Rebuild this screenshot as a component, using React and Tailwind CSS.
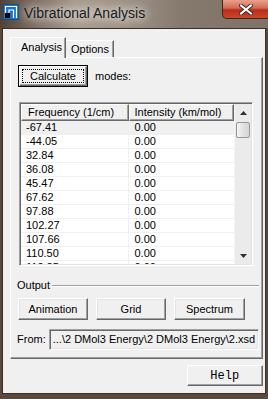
export default function App() {
  const rows = ["-67.41", "-44.05", "32.84", "36.08", "45.47", "67.62", "97.88", "102.27", "107.66", "110.50", "112.25"];
  const btn =
    "h-[22px] w-[70px] flex items-center justify-center bg-[#f0f0f0] border border-t-white border-l-white border-r-[#696969] border-b-[#696969] shadow-[inset_-1px_-1px_0_#a0a0a0,inset_1px_1px_0_#e3e3e3] text-[11px] text-black";
  return (
    <div className="w-[268px] h-[399px] flex flex-col overflow-hidden bg-[#5a4a3e] font-['Liberation_Sans',Arial,sans-serif] text-black">
      {/* title bar */}
      <div className="h-[28px] flex items-start bg-[linear-gradient(90deg,#4e4137_0%,#74665a_10%,#a89c8f_28%,#9e9286_48%,#85796d_68%,#7f7368_100%)]">
        <svg className="ml-[3px] mt-[4px]" width="16" height="16" viewBox="0 0 16 16">
          <rect x="0" y="0" width="16" height="16" fill="#1c74c9" />
          <rect x="0.5" y="0.5" width="15" height="15" fill="none" stroke="#0b4f94" />
          <path d="M2.5 14 V2.5 H13.5 V14" fill="none" stroke="#ffffff" strokeWidth="1.2" />
          <path d="M6 14 V6 H10.5 V14" fill="none" stroke="#ffffff" strokeWidth="1.2" />
          <rect x="2" y="9" width="5" height="5" fill="#000000" />
        </svg>
        <div className="ml-[5px] mt-[5px] text-[14px] leading-[16px] text-[#1a1a1a] [text-shadow:0_0_8px_#ffffff,0_0_12px_rgba(255,255,255,0.8)]">
          Vibrational Analysis
        </div>
        <div className="flex-1" />
        <div className="w-[46px] h-[19px] rounded-bl-[5px] border border-t-0 border-r-0 border-[#4a2018] bg-[linear-gradient(180deg,#e8a08c_0%,#d46a52_45%,#b82e18_55%,#c9472c_100%)] flex items-center justify-center">
          <svg width="14" height="11" viewBox="0 0 14 11">
            <path d="M2 1.5 L12 9.5 M12 1.5 L2 9.5" stroke="#3a2a2a" strokeWidth="4" strokeLinecap="square" />
            <path d="M2 1.5 L12 9.5 M12 1.5 L2 9.5" stroke="#ffffff" strokeWidth="2" strokeLinecap="square" />
          </svg>
        </div>
      </div>

      {/* window body */}
      <div className="flex-1 flex pl-[2px] pr-[3px] pb-[5px]">
        <div className="flex-1 flex flex-col border border-[#3a2f27] bg-[#f0f0f0]">
          {/* tabs */}
          <div className="mt-[8px] ml-[7px] mr-[2px] flex items-end h-[20px] relative z-10 text-[11px]">
            <div className="h-[21px] w-[56px] -mb-px bg-[#f0f0f0] border-t border-l border-t-white border-l-white border-r border-r-[#696969] shadow-[inset_-1px_0_0_#a0a0a0] flex items-center pl-[10px] pb-[2px]">
              Analysis
            </div>
            <div className="h-[17px] w-[48px] bg-[#f0f0f0] border-t border-t-white border-r border-r-[#696969] shadow-[inset_-1px_0_0_#a0a0a0] flex items-center pl-[5px]">
              Options
            </div>
          </div>
          {/* panel */}
          <div className="ml-[7px] mr-[2px] flex flex-col border border-t-white border-l-white border-r-[#696969] border-b-[#696969] shadow-[inset_-1px_-1px_0_#a0a0a0] pl-[7px] pr-[3px] pt-[7px] pb-[8px] text-[11px]">
            <div className="flex items-center h-[22px]">
              <div className="h-[22px] w-[70px] border border-black bg-[#f0f0f0] p-0">
                <div className="h-full w-full border border-t-white border-l-white border-r-[#696969] border-b-[#696969] shadow-[inset_-1px_-1px_0_#a0a0a0] flex items-center justify-center p-[2px]">
                  <div className="h-full w-full border border-dotted border-black flex items-center justify-center">
                    Calculate
                  </div>
                </div>
              </div>
              <span className="ml-[7px]">modes:</span>
            </div>

            {/* list */}
            <div className="mt-[15px] ml-[1px] w-[234px] h-[164px] flex border border-t-[#a0a0a0] border-l-[#a0a0a0] border-r-white border-b-white shadow-[inset_1px_1px_0_#696969,inset_-1px_-1px_0_#e3e3e3] p-[1px] overflow-hidden">
              <div className="flex-1 flex flex-col bg-white overflow-hidden">
                <div className="flex h-[17px] shrink-0">
                  <div className="w-[108px] bg-[#f0f0f0] border border-t-white border-l-white border-r-[#696969] border-b-[#696969] shadow-[inset_-1px_-1px_0_#a0a0a0] flex items-center pl-[6px]">
                    Frequency (1/cm)
                  </div>
                  <div className="w-[106px] bg-[#f0f0f0] border border-t-white border-l-white border-r-[#696969] border-b-[#696969] shadow-[inset_-1px_-1px_0_#a0a0a0] flex items-center pl-[5px]">
                    Intensity (km/mol)
                  </div>
                </div>
                {rows.map((r, i) => (
                  <div key={r} className={"flex h-[14px] shrink-0 border-b border-[#f0f0f0] " + (i === 0 ? "bg-[#f0f0f0]" : "bg-white")}>
                    <div className="w-[108px] border-r border-[#f0f0f0] pl-[5px] leading-[13px]">{r}</div>
                    <div className="w-[106px] pl-[6px] leading-[13px]">0.00</div>
                  </div>
                ))}
              </div>
              {/* scrollbar */}
              <div className="w-[17px] flex flex-col bg-[#ebebeb] border-l border-[#f5f5f5]">
                <div className="h-[17px] flex items-center justify-center">
                  <svg width="7" height="4" viewBox="0 0 7 4"><path d="M3.5 0 L7 4 L0 4 Z" fill="#303030" /></svg>
                </div>
                <div className="mx-[1px] mt-[1px] h-[16px] rounded-[2px] border border-[#979797] bg-[linear-gradient(90deg,#f5f5f5,#e2e2e2_50%,#d5d5d5)]" />
                <div className="flex-1" />
                <div className="h-[17px] flex items-center justify-center">
                  <svg width="7" height="4" viewBox="0 0 7 4"><path d="M0 0 L7 0 L3.5 4 Z" fill="#303030" /></svg>
                </div>
              </div>
            </div>

            {/* Output */}
            <div className="mt-[13px] h-[13px] flex items-center -ml-[1px]">
              <span>Output</span>
              <div className="flex-1 ml-[2px] h-[2px] border-t border-t-[#a0a0a0] border-b border-b-white" />
            </div>
            <div className="mt-[6px] flex gap-[8px]">
              <div className={btn}>Animation</div>
              <div className={btn}>Grid</div>
              <div className={btn + " w-[71px]"}>Spectrum</div>
            </div>
            <div className="mt-[9px] flex items-center h-[21px] -ml-[1px]">
              <span>From:</span>
              <div className="ml-[3px] w-[210px] h-[21px] bg-[#f0f0f0] border border-t-[#a0a0a0] border-l-[#a0a0a0] border-r-white border-b-white shadow-[inset_1px_1px_0_#696969,inset_-1px_-1px_0_#e3e3e3] flex items-center pl-[3px] whitespace-nowrap overflow-hidden">
                ...\2 DMol3 Energy\2 DMol3 Energy\2.xsd
              </div>
            </div>
          </div>

          {/* Help */}
          <div className="mt-[6px] mr-[2px] flex justify-end">
            <div className="h-[21px] w-[76px] flex items-center justify-center bg-[#f0f0f0] border border-t-white border-l-white border-r-[#696969] border-b-[#696969] shadow-[inset_-1px_-1px_0_#a0a0a0] font-['Liberation_Mono',monospace] text-[12px]">
              Help
            </div>
          </div>
        </div>
      </div>
    </div>
  );
}
